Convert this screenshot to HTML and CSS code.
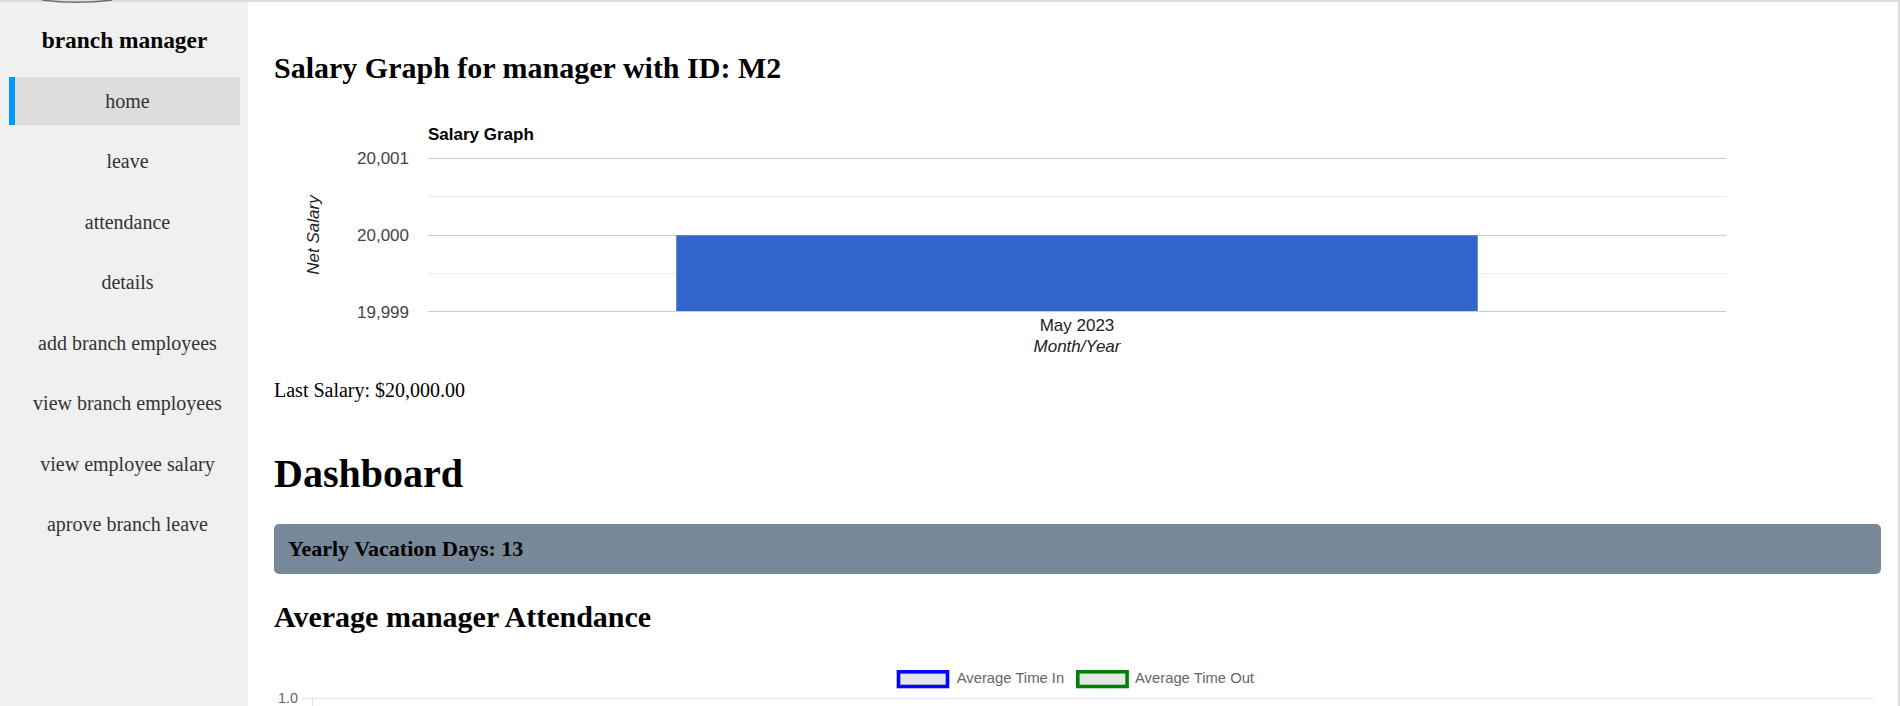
FILE: index.html
```html
<!DOCTYPE html>
<html lang="en">
<head>
<meta charset="utf-8">
<title>branch manager</title>
<link rel="stylesheet" href="styles.css">
</head>
<body>
<div class="page">
  <aside class="sidebar">
    <svg class="logo-edge" width="72" height="4" viewBox="0 0 72 4"><path d="M1 0 Q36 4.5 71 0" fill="none" stroke="#6b6b6b" stroke-width="1.4"/></svg>
    <h3 class="brand">branch manager</h3>
    <ul class="nav">
      <li class="nav-item active">home</li>
      <li class="nav-item">leave</li>
      <li class="nav-item">attendance</li>
      <li class="nav-item">details</li>
      <li class="nav-item">add branch employees</li>
      <li class="nav-item">view branch employees</li>
      <li class="nav-item">view employee salary</li>
      <li class="nav-item">aprove branch leave</li>
    </ul>
  </aside>
  <main class="main">
    <h2 class="section-title first">Salary Graph for manager with ID: M2</h2>
    <div class="salary-chart">
      <svg width="1607" height="275">
        <text x="154" y="55" class="g-title">Salary Graph</text>
        <rect x="154" y="73" width="1298" height="1" fill="#cccccc"/>
        <rect x="154" y="111" width="1298" height="1" fill="#ebebeb"/>
        <rect x="154" y="150" width="1298" height="1" fill="#cccccc"/>
        <rect x="154" y="188" width="1298" height="1" fill="#ebebeb"/>
        <rect x="402.5" y="150.5" width="801" height="76" fill="#3366cc" stroke="#5a84d8" stroke-width="0.8"/>
        <rect x="154" y="226" width="1298" height="1" fill="#cccccc"/>
        <text x="135" y="79" class="g-ylabel">20,001</text>
        <text x="135" y="156" class="g-ylabel">20,000</text>
        <text x="135" y="232.5" class="g-ylabel">19,999</text>
        <text x="803" y="245.5" class="g-xlabel">May 2023</text>
        <text x="803" y="267" class="g-axis-title">Month/Year</text>
        <text transform="translate(45 150) rotate(-90)" class="g-axis-title">Net Salary</text>
      </svg>
    </div>
    <p class="last-salary">Last Salary: $20,000.00</p>
    <h1 class="dash">Dashboard</h1>
    <div class="vacation"><h3 class="vacation-text">Yearly Vacation Days: 13</h3></div>
    <h2 class="section-title att">Average manager Attendance</h2>
    <div class="att-chart">
      <svg width="1607" height="80">
        <rect x="624.5" y="37.8" width="49" height="14.7" fill="rgba(0,0,0,0.1)" stroke="#0000ff" stroke-width="3.6"/>
        <text x="682.7" y="49.2" class="c-legend">Average Time In</text>
        <rect x="803.8" y="37.8" width="49.3" height="14.7" fill="rgba(0,0,0,0.1)" stroke="#008000" stroke-width="3.6"/>
        <text x="861" y="49.2" class="c-legend">Average Time Out</text>
        <line x1="28" y1="64.5" x2="1600" y2="64.5" stroke="rgba(0,0,0,0.1)" stroke-width="1"/>
        <line x1="38.5" y1="64" x2="38.5" y2="80" stroke="rgba(0,0,0,0.1)" stroke-width="1"/>
        <text x="24" y="69.4" class="c-tick">1.0</text>
      </svg>
    </div>
  </main>
</div>
</body>
</html>
```
FILE: styles.css
```css
html, body {
  margin: 0;
  padding: 0;
  height: 100%;
  overflow: hidden;
  background: #ffffff;
}

body {
  font-family: "Liberation Serif", "Times New Roman", serif;
  font-size: 20px;
  color: #000;
}

.page {
  position: relative;
  display: flex;
  height: 706px;
  box-sizing: border-box;
  border-top: 2px solid #dcdcdc;
  border-right: 2px solid #dcdcdc;
}

.sidebar {
  width: 248px;
  flex: none;
  background: #f0f0f0;
  padding: 0 8px 0 9px;
  box-sizing: border-box;
}

.logo-edge {
  position: absolute;
  left: 41px;
  top: -2px;
}

.brand {
  font-size: 23.4px;
  line-height: 27px;
  margin: 25px 0 23px;
  text-align: center;
  font-weight: bold;
}

.nav {
  list-style: none;
  margin: 0;
  padding: 0;
}

.nav-item {
  height: 48px;
  line-height: 23px;
  display: flex;
  align-items: center;
  justify-content: center;
  margin-bottom: 12.5px;
  color: #333333;
  border-left: 6px solid transparent;
}

.nav-item.active {
  background: #dddddd;
  border-left-color: #0099ff;
}

.main {
  flex: 1;
  min-width: 0;
  padding: 0 17px 0 26px;
}

.section-title {
  font-size: 30px;
  line-height: 34px;
  font-weight: bold;
  margin: 0;
}

.section-title.first {
  margin-top: 49px;
}

.section-title.att {
  margin-top: 26px;
}

.salary-chart {
  height: 275px;
}

.salary-chart svg,
.att-chart svg {
  display: block;
}

.g-title {
  font-family: "Liberation Sans", Arial, sans-serif;
  font-size: 17px;
  font-weight: bold;
  fill: #000;
}

.g-ylabel {
  font-family: "Liberation Sans", Arial, sans-serif;
  font-size: 17px;
  fill: #444444;
  text-anchor: end;
}

.g-xlabel {
  font-family: "Liberation Sans", Arial, sans-serif;
  font-size: 17px;
  fill: #222222;
  text-anchor: middle;
}

.g-axis-title {
  font-family: "Liberation Sans", Arial, sans-serif;
  font-size: 17px;
  font-style: italic;
  fill: #222222;
  text-anchor: middle;
}

.last-salary {
  margin: 19px 0 0;
  line-height: 23px;
}

.dash {
  font-size: 40px;
  line-height: 46px;
  margin: 48.5px 0 0;
}

.vacation {
  margin-top: 27.5px;
  height: 50px;
  background: #778899;
  border-radius: 5px;
  display: flex;
  align-items: center;
  padding: 0 14px;
}

.vacation-text {
  font-size: 22px;
  line-height: 26px;
  margin: 0;
}

.att-chart {
  height: 80px;
}

.c-legend {
  font-family: "Liberation Sans", Arial, sans-serif;
  font-size: 14.8px;
  fill: #666666;
}

.c-tick {
  font-family: "Liberation Sans", Arial, sans-serif;
  font-size: 14.4px;
  fill: #666666;
  text-anchor: end;
}
```
